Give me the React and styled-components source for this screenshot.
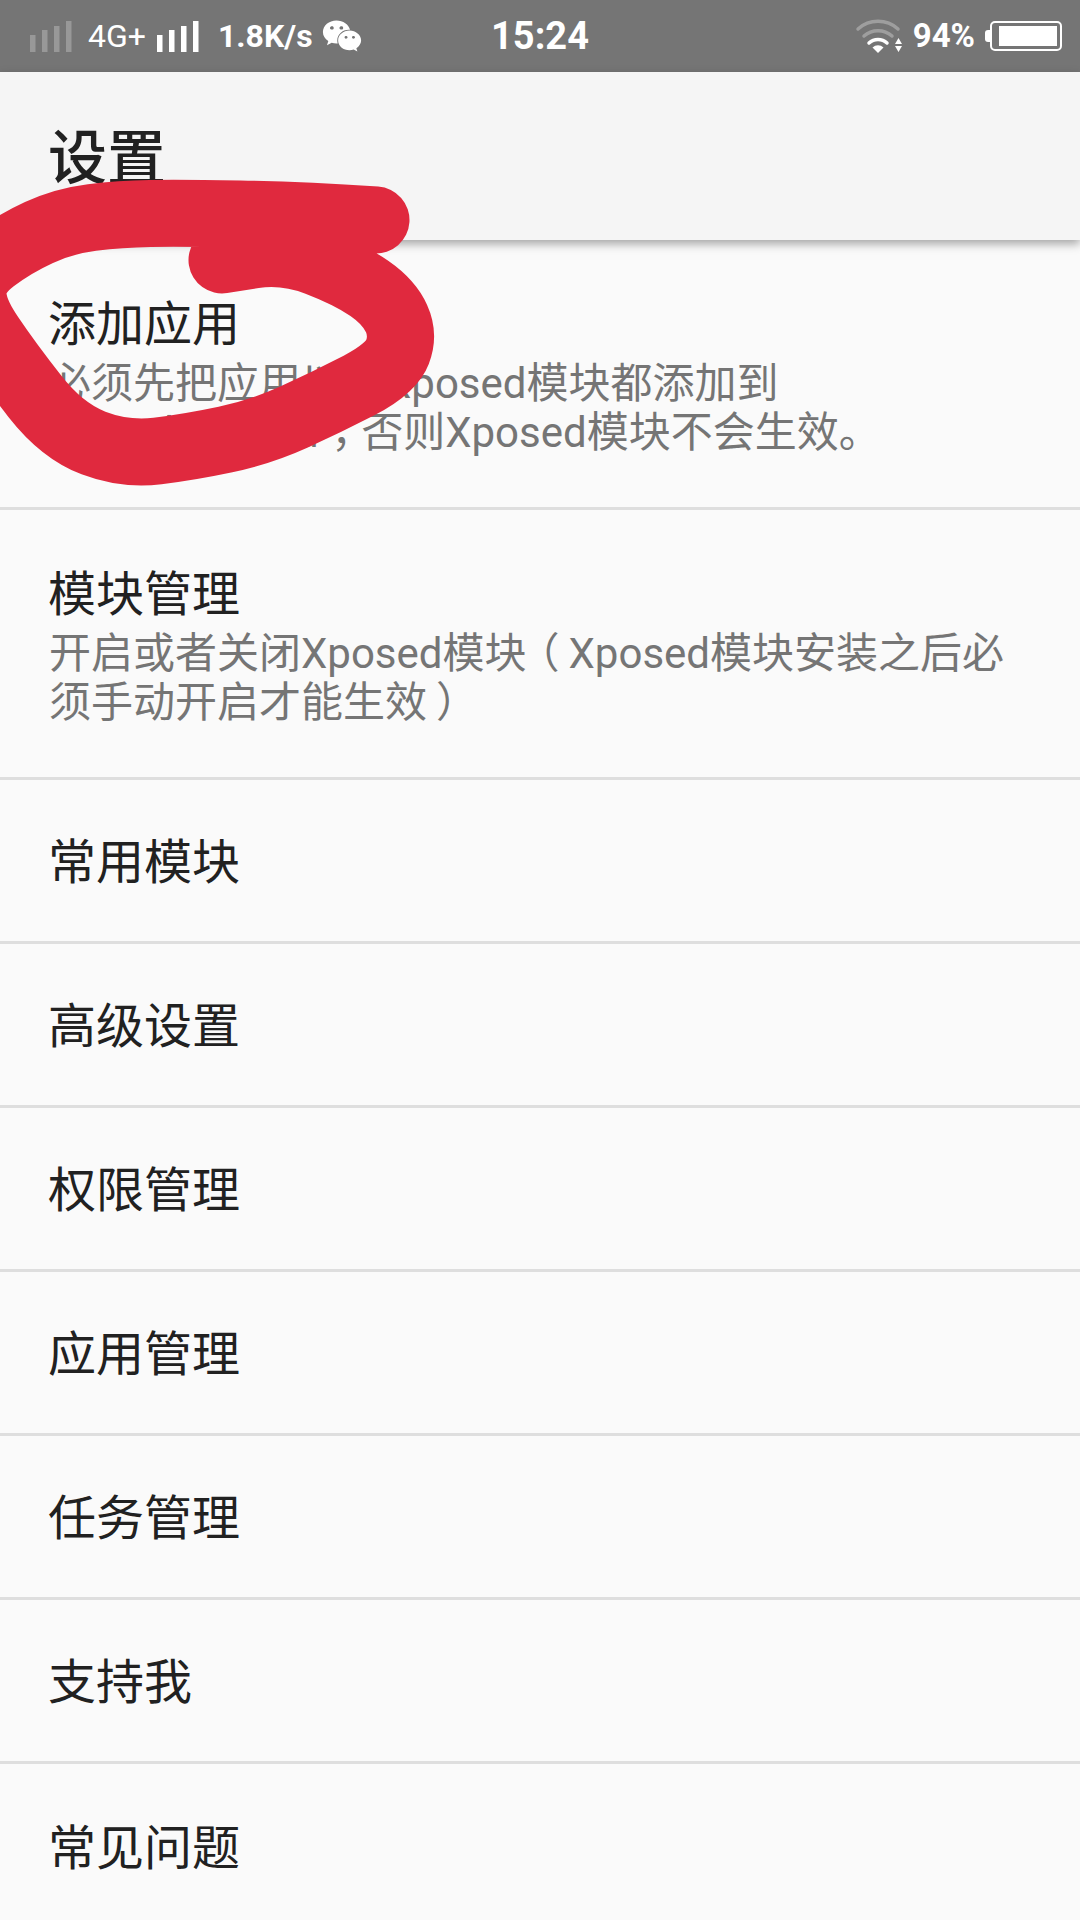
import React from "react";
import styled, { createGlobalStyle } from "styled-components";
import { FaWeixin } from "react-icons/fa";

const GlobalStyle = createGlobalStyle`
  html, body {
    margin: 0;
    padding: 0;
    background: #fafafa;
  }
  body {
    font-family: Roboto, "Noto Sans CJK SC", sans-serif;
  }
`;

const Screen = styled.div`
  position: relative;
  width: 1080px;
  height: 1920px;
  overflow: hidden;
  background: #fafafa;
`;

const StatusBar = styled.div`
  display: grid;
  grid-template-columns: 1fr auto 1fr;
  align-items: center;
  height: 72px;
  background: #757575;
  color: #fff;
`;

const StatusLeft = styled.div`
  display: flex;
  align-items: center;
  padding-left: 30px;
`;

const StatusRight = styled.div`
  display: flex;
  align-items: center;
  justify-content: flex-end;
  padding-right: 18px;
`;

const Bars = styled.svg`
  display: block;
  width: 42px;
  height: 31px;
  margin-right: ${(p) => p.$gap}px;
  fill: #fff;
  opacity: ${(p) => (p.$dim ? 0.25 : 1)};
`;

const Network = styled.span`
  font-size: 32px;
  line-height: 36px;
  margin-right: 11px;
  margin-left: -2px;
`;

const Speed = styled.span`
  font-size: 32px;
  line-height: 36px;
  font-weight: 700;
  margin-right: 9px;
`;

const WechatIcon = styled(FaWeixin)`
  display: block;
  width: 40px;
  height: 36px;
`;

const Clock = styled.span`
  font-size: 38px;
  line-height: 42px;
  font-weight: 700;
`;

const WifiIcon = styled.svg`
  display: block;
  width: 48px;
  height: 36px;
  margin-right: 10px;
`;

const Percent = styled.span`
  font-size: 33px;
  line-height: 36px;
  font-weight: 700;
  margin-right: 10px;
`;

const BatteryNub = styled.div`
  width: 5px;
  height: 12px;
  background: #fff;
  border-radius: 3px 0 0 3px;
`;

const Battery = styled.div`
  box-sizing: border-box;
  width: 72px;
  height: 30px;
  padding: 3px;
  border: 2px solid #fff;
  border-radius: 5px;
  display: flex;
  justify-content: flex-end;
`;

const BatteryFill = styled.div`
  width: 94%;
  height: 100%;
  background: #fff;
`;

const Header = styled.header`
  position: relative;
  box-sizing: border-box;
  display: flex;
  align-items: center;
  height: 168px;
  padding: 5px 0 0 48px;
  background: #f5f5f5;
  box-shadow: 0 4px 9px rgba(0, 0, 0, 0.34);
`;

const HeaderTitle = styled.h1`
  margin: 0;
  font-size: 59px;
  line-height: 68px;
  font-weight: 500;
  color: #212121;
`;

const List = styled.div`
  display: flex;
  flex-direction: column;
`;

const Row = styled.div`
  box-sizing: border-box;
  display: flex;
  flex-direction: column;
  justify-content: center;
  height: ${(p) => (p.$tall ? 270 : 164)}px;
  padding: ${(p) => (p.$tall ? 0 : 5)}px 50px 0 48px;
  border-bottom: 3px solid #dedede;

  &:last-child {
    border-bottom: 0;
  }
`;

const RowTitle = styled.div`
  font-size: 48px;
  line-height: 68px;
  color: #212121;
`;

const RowSummary = styled.div`
  font-size: 42px;
  line-height: 49px;
  color: #757575;
  padding-left: 1px;
`;

const Spaced = styled.span`
  letter-spacing: 0.5px;
`;

// full-width punctuation sits mid-cell on the phone: half-width glyph plus padding
const Punct = styled.span`
  font-feature-settings: "halt";
  padding: 0 ${(p) => p.$right}px 0 ${(p) => p.$left}px;
`;

const Scribble = styled.svg`
  position: absolute;
  top: 0;
  left: 0;
  width: 1080px;
  height: 600px;
  pointer-events: none;
`;

const rows = [
  {
    title: "添加应用",
    summary: (
      <>
        必须先把应用以及Xposed模块都添加到<Spaced>VirtualXposed</Spaced>
        <Punct $left={12} $right={9}>，</Punct>否则Xposed模块不会生效。
      </>
    ),
  },
  {
    title: "模块管理",
    summary: (
      <>
        开启或者关闭Xposed模块<Punct $left={12} $right={9}>（</Punct>
        Xposed模块安装之后必须手动开启才能生效<Punct $left={9} $right={12}>）</Punct>
      </>
    ),
  },
  { title: "常用模块" },
  { title: "高级设置" },
  { title: "权限管理" },
  { title: "应用管理" },
  { title: "任务管理" },
  { title: "支持我" },
  { title: "常见问题" },
];

// centre line of the red marker stroke
const strokePoints = [
  [376, 220], [300, 215], [180, 213], [120, 214], [64, 221], [14, 244], [-27, 275],
  [-27, 310], [8, 362], [62, 431], [125, 455], [190, 447], [261, 432], [327, 402],
  [391, 369], [404, 335], [389, 302], [350, 275], [285, 250], [222, 260],
];

const smoothPath = (pts) => {
  let d = `M${pts[0][0]} ${pts[0][1]}`;
  for (let i = 1; i < pts.length - 1; i++) {
    const mx = (pts[i][0] + pts[i + 1][0]) / 2;
    const my = (pts[i][1] + pts[i + 1][1]) / 2;
    d += ` Q${pts[i][0]} ${pts[i][1]} ${mx} ${my}`;
  }
  const last = pts[pts.length - 1];
  return `${d} L${last[0]} ${last[1]}`;
};

const SignalBars = ({ dim, gap }) => (
  <Bars viewBox="0 0 42 31" $dim={dim} $gap={gap}>
    <rect x="0" y="14" width="5.5" height="17" />
    <rect x="12" y="9" width="5.5" height="22" />
    <rect x="24" y="5" width="5.5" height="26" />
    <rect x="36" y="0" width="5.5" height="31" />
  </Bars>
);

const Wifi = () => (
  <WifiIcon viewBox="0 0 48 36">
    <g fill="none" stroke="#fff" strokeWidth="3.5" strokeLinecap="round">
      <path d="M3 11 A30 30 0 0 1 43 11" opacity="0.3" />
      <path d="M9 18 A21 21 0 0 1 37 18" opacity="0.3" />
      <path d="M14 25 A13 13 0 0 1 32 25" />
    </g>
    <path d="M17.5 29.5 A8 8 0 0 1 28.5 29.5 L23 35 Z" fill="#fff" />
    <path d="M40 26 L43.5 20 L47 26 Z M40 28 L47 28 L43.5 34 Z" fill="#fff" />
  </WifiIcon>
);

const App = () => (
  <Screen>
    <GlobalStyle />
    <StatusBar>
      <StatusLeft>
        <SignalBars dim gap={18} />
        <Network>4G+</Network>
        <SignalBars gap={19} />
        <Speed>1.8K/s</Speed>
        <WechatIcon />
      </StatusLeft>
      <Clock>15:24</Clock>
      <StatusRight>
        <Wifi />
        <Percent>94%</Percent>
        <BatteryNub />
        <Battery>
          <BatteryFill />
        </Battery>
      </StatusRight>
    </StatusBar>

    <Header>
      <HeaderTitle>设置</HeaderTitle>
    </Header>

    <List>
      {rows.map((row) => (
        <Row key={row.title} $tall={!!row.summary}>
          <RowTitle>{row.title}</RowTitle>
          {row.summary && <RowSummary>{row.summary}</RowSummary>}
        </Row>
      ))}
    </List>

    {/* hand-drawn circle on top of the first row */}
    <Scribble viewBox="0 0 1080 600">
      <path
        d={smoothPath(strokePoints)}
        fill="none"
        stroke="#e0293e"
        strokeWidth="67"
        strokeLinecap="round"
        strokeLinejoin="round"
      />
    </Scribble>
  </Screen>
);

export default App;
